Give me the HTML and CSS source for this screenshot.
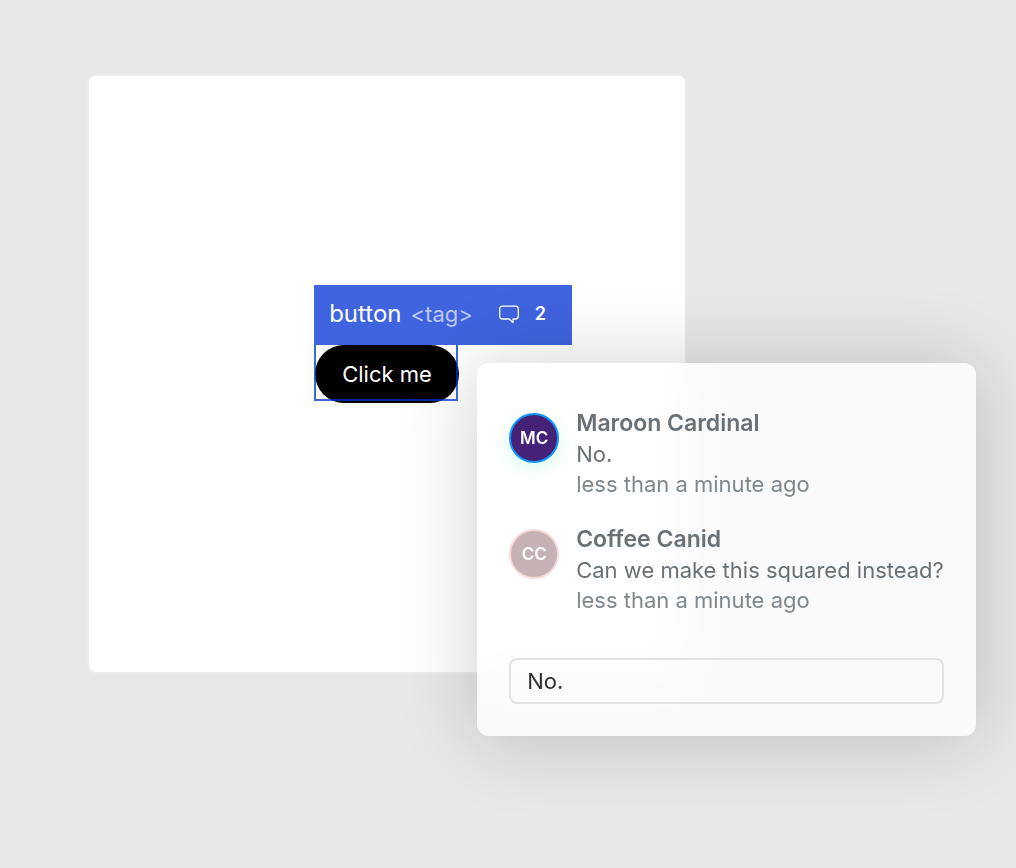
FILE: index.html
```html
<!DOCTYPE html>
<html lang="en">
<head>
<meta charset="utf-8">
<meta name="viewport" content="width=device-width, initial-scale=1">
<title>Component comments</title>
<link rel="stylesheet" href="styles.css">
</head>
<body>
<main class="canvas">
  <section class="frame">
    <div class="element">
      <button class="pill" type="button">Click me</button>
      <div class="outline"></div>
      <div class="tag-bar">
        <span class="tag-name">button</span>
        <span class="tag-kind">&lt;tag&gt;</span>
        <button class="comment-count" type="button" aria-label="2 comments">
          <svg class="bubble" width="22" height="20" viewBox="0 0 22 20" fill="none" stroke="currentColor" stroke-width="1.3" stroke-linejoin="round" aria-hidden="true">
            <path d="M4.5 2.2H17.5Q20.3 2.2 20.3 5V12.2Q20.3 15 17.5 15H15V18.6L11.2 15H4.5Q1.7 15 1.7 12.2V5Q1.7 2.2 4.5 2.2Z"/>
          </svg>
          <span>2</span>
        </button>
      </div>
      <aside class="popover" aria-label="Comments">
        <ul class="comments">
          <li class="comment">
            <span class="avatar avatar-active">MC</span>
            <div class="comment-body">
              <strong class="author">Maroon Cardinal</strong>
              <p class="message">No.</p>
              <time class="time">less than a minute ago</time>
            </div>
          </li>
          <li class="comment">
            <span class="avatar avatar-idle">CC</span>
            <div class="comment-body">
              <strong class="author">Coffee Canid</strong>
              <p class="message">Can we make this squared instead?</p>
              <time class="time">less than a minute ago</time>
            </div>
          </li>
        </ul>
        <input class="reply" type="text" value="No." aria-label="Reply">
      </aside>
    </div>
  </section>
</main>
</body>
</html>
```
FILE: styles.css
```css
* {
  box-sizing: border-box;
}

body {
  margin: 0;
  min-height: 100vh;
  background: #e8e8e8;
  font-family: Inter, "Liberation Sans", sans-serif;
  font-size: 22px;
  line-height: 30px;
}

button,
input {
  font: inherit;
}

.canvas {
  padding: 76px 89px;
}

.frame {
  display: flex;
  align-items: center;
  justify-content: center;
  max-width: 596px;
  aspect-ratio: 1;
  background: #fff;
  border-radius: 6px;
  box-shadow: 0 0 0 2px #ebebeb;
}

.element {
  position: relative;
}

.pill {
  display: block;
  padding: 14px 27px;
  border: 0;
  border-radius: 29px;
  background: #000;
  color: #fff;
}

.outline {
  position: absolute;
  inset: -2px 1px 2px -1px;
  border: 2px solid rgba(0, 51, 214, 0.75);
  pointer-events: none;
}

.tag-bar {
  position: absolute;
  left: -1px;
  bottom: 100%;
  display: flex;
  align-items: center;
  gap: 9px;
  height: 60px;
  padding: 0 26px 2px 15px;
  background: #4064df;
  color: #fff;
  font-size: 24px;
  white-space: nowrap;
}

.tag-kind {
  font-size: 22px;
  opacity: 0.65;
}

.comment-count {
  display: flex;
  align-items: center;
  gap: 15px;
  margin-left: 16px;
  padding: 0;
  border: 0;
  background: none;
  color: inherit;
  font-size: 18px;
  font-weight: 600;
}

.popover {
  position: absolute;
  top: 18px;
  left: 162px;
  padding: 44px 32px 32px;
  border-radius: 12px;
  background: rgba(255, 255, 255, 0.78);
  -webkit-backdrop-filter: blur(24px);
  backdrop-filter: blur(24px);
  box-shadow: 0 2px 80px rgba(0, 0, 0, 0.19);
}

.comments {
  display: grid;
  gap: 24px;
  margin: 0 0 43px;
  padding: 0;
  list-style: none;
}

.comment {
  display: flex;
  gap: 17px;
}

.avatar {
  display: flex;
  flex: none;
  align-items: center;
  justify-content: center;
  width: 50px;
  height: 50px;
  margin-top: 6px;
  border: 2px solid;
  border-radius: 50%;
  color: #fff;
  font-size: 17px;
  font-weight: 600;
}

.avatar-active {
  border-color: #0d96fb;
  background: #452277;
  box-shadow: 0 6px 16px rgba(64, 224, 190, 0.2);
}

.avatar-idle {
  border-color: #f8dada;
  background: #c6b2b4;
}

.author {
  display: block;
  color: #687178;
  font-size: 23px;
  font-weight: 600;
  line-height: 32px;
}

.message {
  margin: 0;
  color: #687178;
  white-space: nowrap;
}

.time {
  display: block;
  color: #7e888e;
}

.reply {
  display: block;
  width: 100%;
  height: 46px;
  padding: 0 16px;
  border: 2px solid #e2e2e2;
  border-radius: 8px;
  outline: 0;
  background: transparent;
  color: #303030;
}
```
